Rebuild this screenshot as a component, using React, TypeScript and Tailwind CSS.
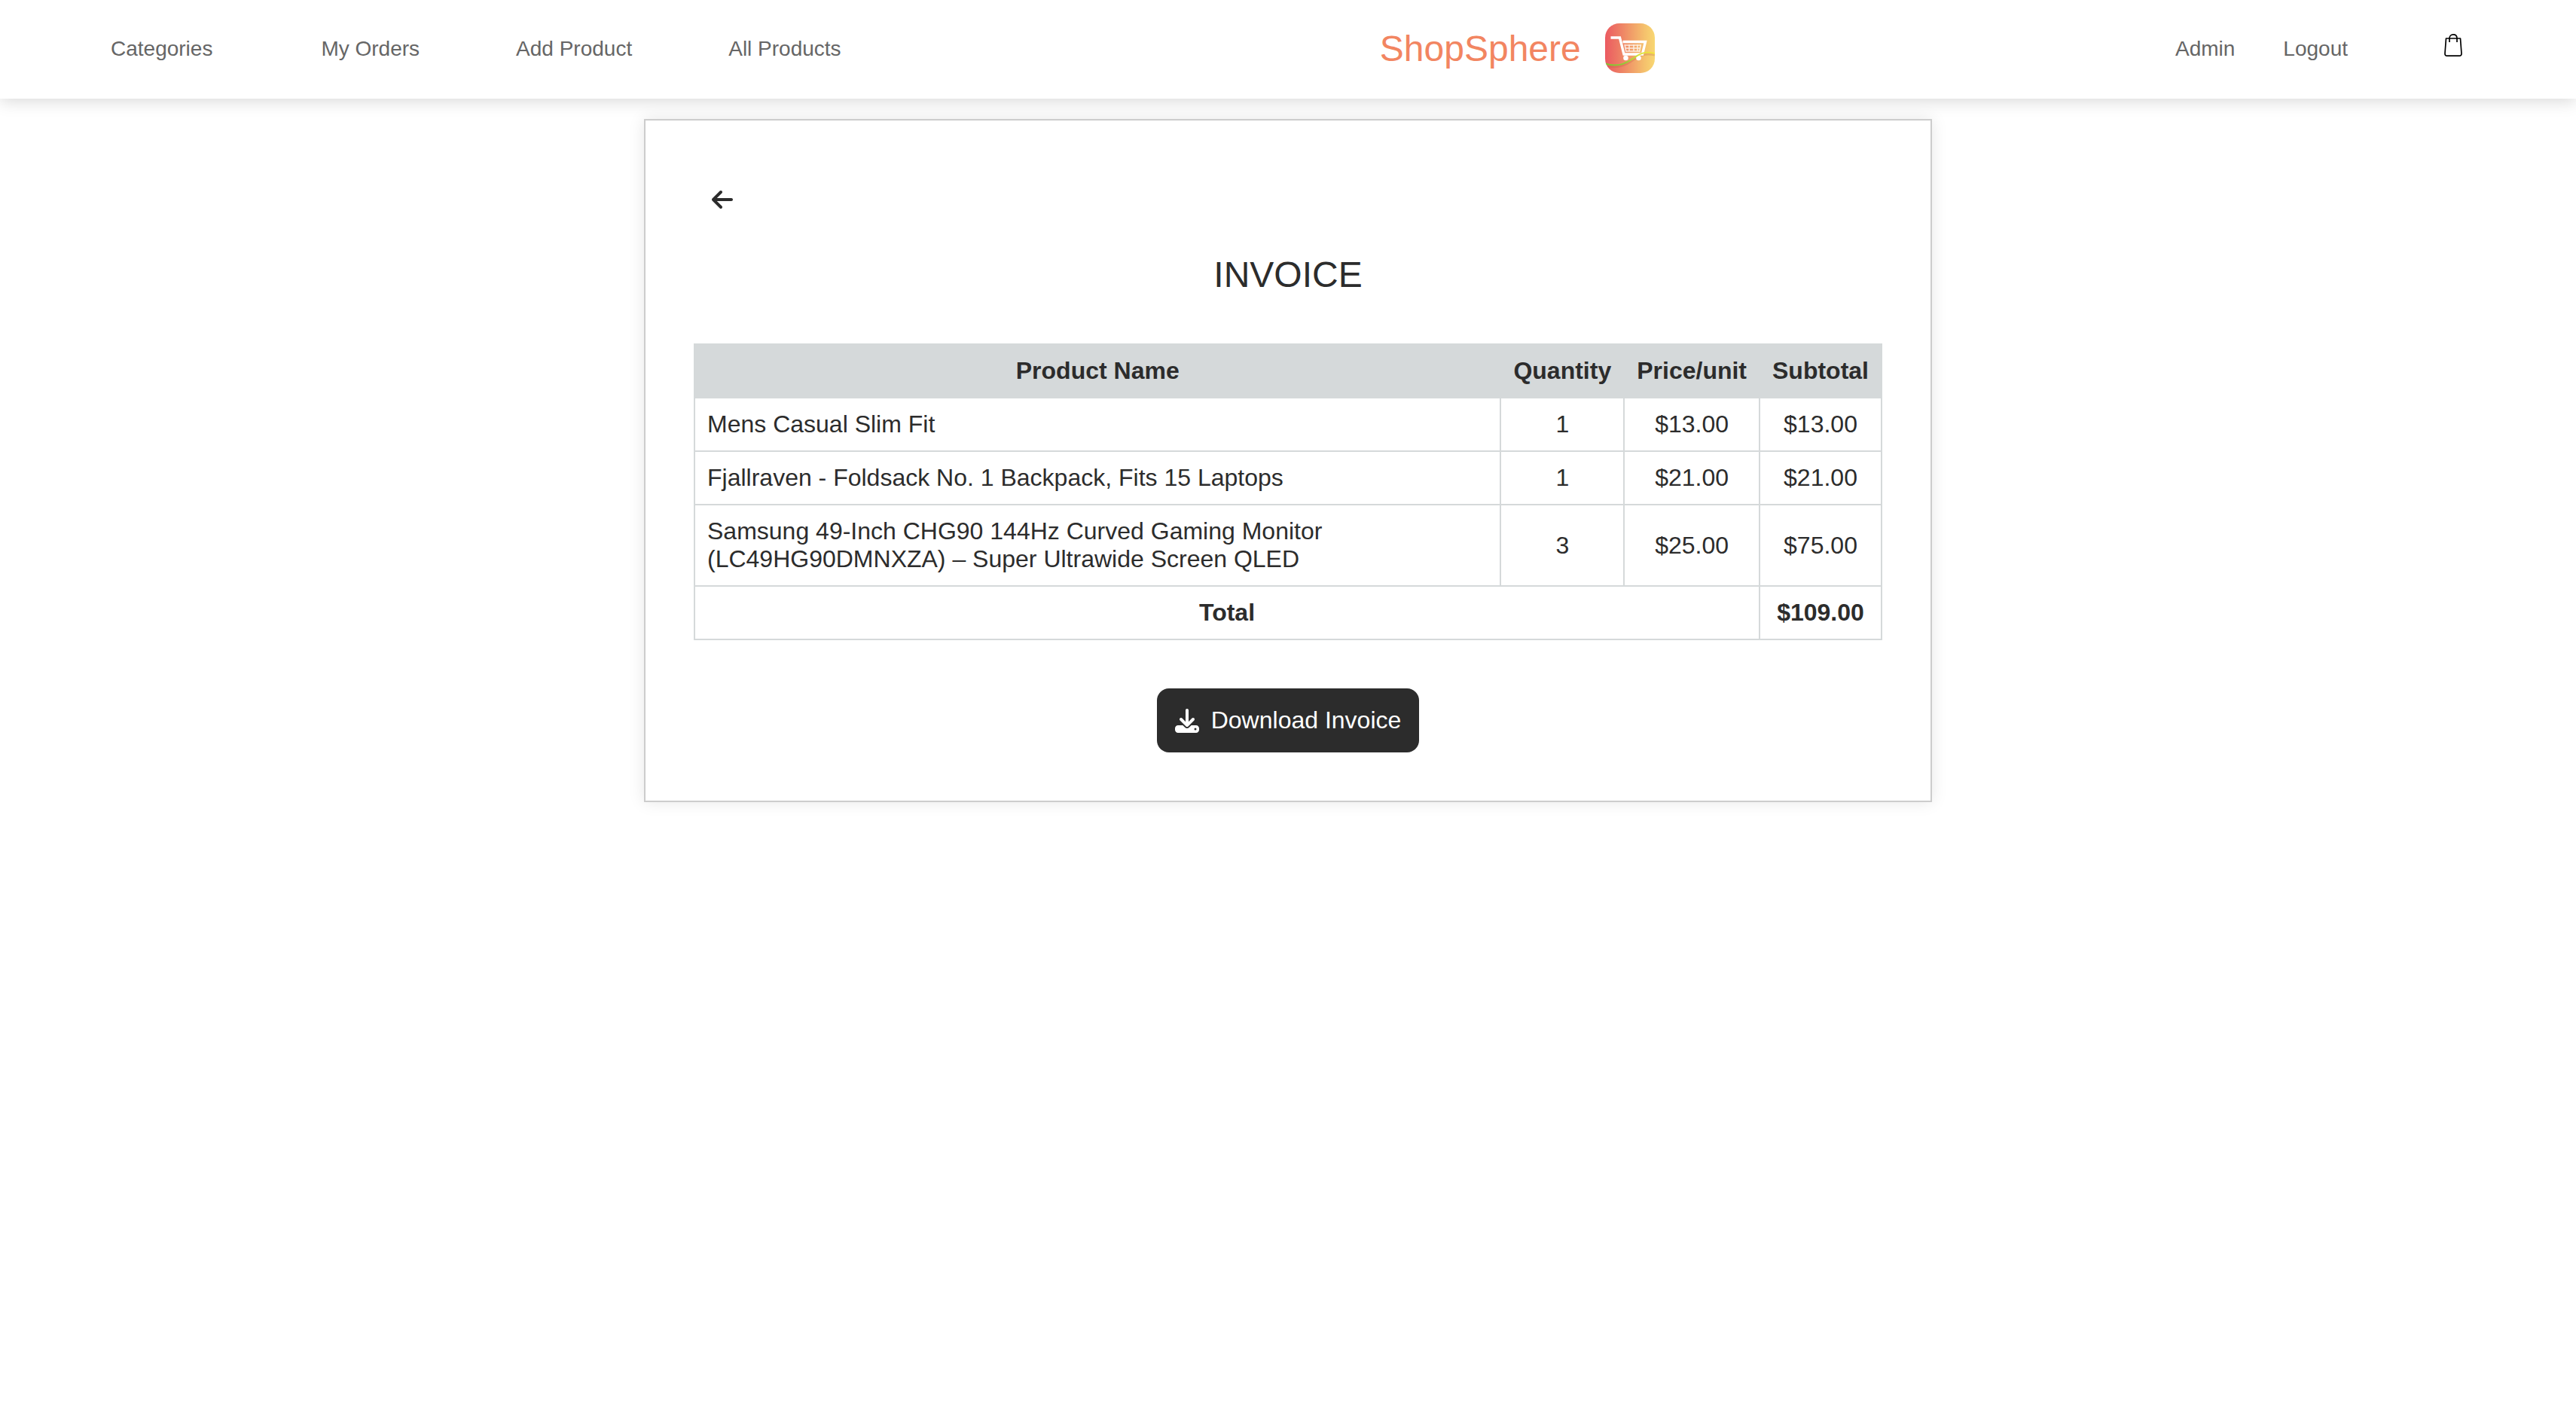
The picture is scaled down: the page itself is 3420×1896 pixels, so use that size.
import { FaArrowLeft, FaDownload } from "react-icons/fa6";

type Item = { name: string; quantity: number; price: number };

const items: Item[] = [
  { name: "Mens Casual Slim Fit", quantity: 1, price: 13 },
  { name: "Fjallraven - Foldsack No. 1 Backpack, Fits 15 Laptops", quantity: 1, price: 21 },
  {
    name: "Samsung 49-Inch CHG90 144Hz Curved Gaming Monitor (LC49HG90DMNXZA) – Super Ultrawide Screen QLED",
    quantity: 3,
    price: 25,
  },
];

const money = (value: number) => `$${value.toFixed(2)}`;

function LogoMark() {
  return (
    <svg viewBox="0 0 66 66" className="size-[66px]" aria-hidden="true">
      <defs>
        <linearGradient id="tile" x1="0" y1="0" x2="1" y2="0">
          <stop offset="0" stopColor="#eb5a61" />
          <stop offset="0.25" stopColor="#ed7864" />
          <stop offset="0.8" stopColor="#f5c26d" />
          <stop offset="1" stopColor="#f8d772" />
        </linearGradient>
        <linearGradient id="swoosh" gradientUnits="userSpaceOnUse" x1="0" y1="0" x2="66" y2="0">
          <stop offset="0" stopColor="#7cc72f" />
          <stop offset="0.4" stopColor="#8fce35" />
          <stop offset="0.7" stopColor="#dbe53a" />
          <stop offset="1" stopColor="#f7e43c" />
        </linearGradient>
        <clipPath id="tileClip">
          <rect width="66" height="66" rx="19" />
        </clipPath>
      </defs>
      <g clipPath="url(#tileClip)">
        <rect width="66" height="66" fill="url(#tile)" />
        <path d="M0 56C14 60 25 57 35 50S52 39 66 42" fill="none" stroke="#b4503c" strokeOpacity="0.22" strokeWidth="3" />
        <path d="M7.500 19H19.500L25 41H49.500L53.500 24.500H23.500" fill="none" stroke="#fff" strokeWidth="3.400" />
        <path d="M26 29H47.500M26.500 33H46.500M27.500 37H46M32 28V37M38 28V37M43 28V37M26 28L28 38M47.500 28L45.500 38" fill="none" stroke="#fff" strokeOpacity="0.8" strokeWidth="1.500" />
        <circle cx="27.500" cy="46" r="3.300" fill="#fff" />
        <circle cx="44.500" cy="46" r="3.300" fill="#fff" />
        <path d="M0 53.500C14 58 25 55 35 48S52 36 66 40" fill="none" stroke="url(#swoosh)" strokeWidth="1.900" />
      </g>
    </svg>
  );
}

function BagIcon() {
  return (
    <svg viewBox="0 0 24 30" className="h-[30px] w-6" fill="none" stroke="#000" strokeWidth="1.700" aria-hidden="true">
      <path d="M2.500 6H21.500L23 26C23.100 28 22 29.100 20.200 29.100H3.800C2 29.100 0.900 28 1 26Z" strokeLinejoin="round" />
      <path d="M7 11V6C7 2.800 9 0.900 12 0.900S17 2.800 17 6V11" />
    </svg>
  );
}

export default function App() {
  const total = items.reduce((sum, item) => sum + item.quantity * item.price, 0);

  return (
    <div className="min-h-screen bg-white font-['Liberation_Sans',Arial,sans-serif] text-[32px] leading-[37px] text-[#2c2c2c]">
      <header className="flex h-[131px] items-center justify-between bg-white pr-[151px] pb-[3px] pl-[147px] text-[28px] text-[#666] shadow-[0_4px_20px_rgba(0,0,0,0.15)]">
        <nav className="mr-6 flex gap-32">
          <a href="#categories" className="mr-4">Categories</a>
          <a href="#orders">My Orders</a>
          <a href="#add">Add Product</a>
          <a href="#products">All Products</a>
        </nav>
        <a href="#home" className="flex items-center gap-8 text-[48px] leading-[55px] text-[#f28561]">
          ShopSphere
          <LogoMark />
        </a>
        <div className="flex items-center">
          <a href="#admin" className="mr-16">Admin</a>
          <a href="#logout" className="mr-32">Logout</a>
          <button type="button" aria-label="Shopping bag" className="mb-2">
            <BagIcon />
          </button>
        </div>
      </header>

      <main className="mx-auto mt-[27px] w-1/2 border-2 border-[#ccc] bg-white p-16 shadow-[0_0_20px_rgba(0,0,0,0.1)]">
        <button type="button" aria-label="Back" className="flex h-[81px] items-center px-6">
          <FaArrowLeft className="h-8 w-7" />
        </button>
        <h1 className="mt-8 text-center text-[48px] leading-[55px]">INVOICE</h1>
        <table className="mt-16 w-full border-collapse">
          <thead>
            <tr className="bg-[#d5d9da]">
              <th className="w-full border-2 border-[#d5d9da] p-4">Product Name</th>
              <th className="border-2 border-[#d5d9da] p-4">Quantity</th>
              <th className="border-2 border-[#d5d9da] p-4">Price/unit</th>
              <th className="border-2 border-[#d5d9da] p-4">Subtotal</th>
            </tr>
          </thead>
          <tbody>
            {items.map((item) => (
              <tr key={item.name}>
                <td className="border-2 border-[#d5d9da] p-4">{item.name}</td>
                <td className="border-2 border-[#d5d9da] p-4 text-center">{item.quantity}</td>
                <td className="border-2 border-[#d5d9da] p-4 text-center">{money(item.price)}</td>
                <td className="border-2 border-[#d5d9da] p-4 text-center">{money(item.quantity * item.price)}</td>
              </tr>
            ))}
          </tbody>
          <tfoot>
            <tr>
              <th colSpan={3} className="border-2 border-[#d5d9da] p-4">Total</th>
              <th className="border-2 border-[#d5d9da] p-4">{money(total)}</th>
            </tr>
          </tfoot>
        </table>
        <button type="button" className="mx-auto mt-16 flex items-center gap-4 rounded-2xl bg-[#2c2c2c] p-6 text-white">
          <FaDownload className="size-8" />
          Download Invoice
        </button>
      </main>
    </div>
  );
}
